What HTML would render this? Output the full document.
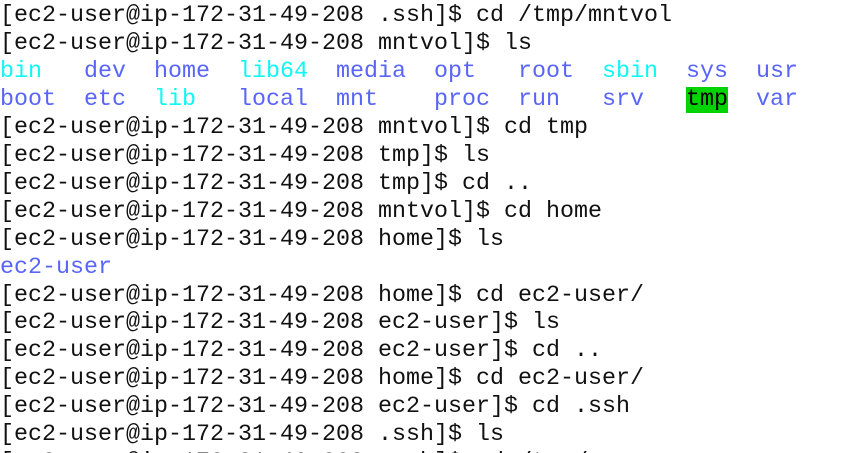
<!DOCTYPE html>
<html><head><meta charset="utf-8"><style>
html,body{margin:0;padding:0;background:#fff;width:841px;height:453px;overflow:hidden}
#w{position:relative;width:841px;height:453px;overflow:hidden}
pre{margin:0;position:absolute;left:0;top:3px;font-family:"Liberation Mono",monospace;font-size:23.33px;line-height:27.95px;color:#111;white-space:pre}
.c{color:#10f5f5}.b{color:#5865f8}.g{background:#00d400;color:#000}
</style></head><body><div id="w">
<pre>[ec2-user@ip-172-31-49-208 .ssh]$ cd /tmp/mntvol
[ec2-user@ip-172-31-49-208 mntvol]$ ls
<span class="c">bin</span>   <span class="b">dev</span>  <span class="b">home</span>  <span class="c">lib64</span>  <span class="b">media</span>  <span class="b">opt</span>   <span class="b">root</span>  <span class="c">sbin</span>  <span class="b">sys</span>  <span class="b">usr</span>
<span class="b">boot</span>  <span class="b">etc</span>  <span class="c">lib</span>   <span class="b">local</span>  <span class="b">mnt</span>    <span class="b">proc</span>  <span class="b">run</span>   <span class="b">srv</span>   <span class="g">tmp</span>  <span class="b">var</span>
[ec2-user@ip-172-31-49-208 mntvol]$ cd tmp
[ec2-user@ip-172-31-49-208 tmp]$ ls
[ec2-user@ip-172-31-49-208 tmp]$ cd ..
[ec2-user@ip-172-31-49-208 mntvol]$ cd home
[ec2-user@ip-172-31-49-208 home]$ ls
<span class="b">ec2-user</span>
[ec2-user@ip-172-31-49-208 home]$ cd ec2-user/
[ec2-user@ip-172-31-49-208 ec2-user]$ ls
[ec2-user@ip-172-31-49-208 ec2-user]$ cd ..
[ec2-user@ip-172-31-49-208 home]$ cd ec2-user/
[ec2-user@ip-172-31-49-208 ec2-user]$ cd .ssh
[ec2-user@ip-172-31-49-208 .ssh]$ ls
[ec2-user@ip-172-31-49-208 .ssh]$ cd /tmp/</pre>
</div></body></html>
